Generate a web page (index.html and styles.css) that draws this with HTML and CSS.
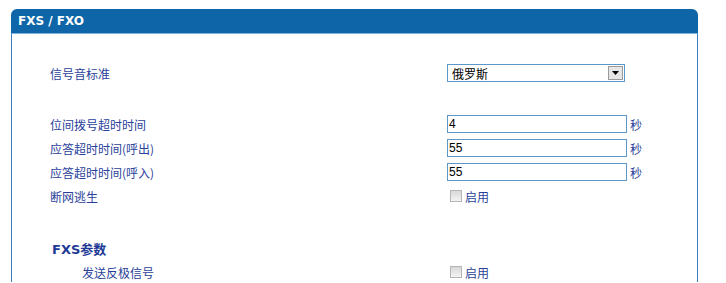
FILE: index.html
```html
<!DOCTYPE html>
<html>
<head>
<meta charset="utf-8">
<title>FXS / FXO</title>
<link rel="stylesheet" href="styles.css">
</head>
<body>

<div class="panel">
  <div class="panel-head">FXS / FXO</div>
  <div class="panel-body">

    <div class="row first">
      <div class="label">信号音标准</div>
      <div class="ctrl">
        <div class="select">
          <span class="select-text">俄罗斯</span>
          <span class="select-btn"><svg width="7" height="4" viewBox="0 0 7 4"><path d="M0 0h7L3.5 4z" fill="#000"/></svg></span>
        </div>
      </div>
    </div>

    <div class="row gap">
      <div class="label">位间拨号超时时间</div>
      <div class="ctrl"><input class="text" value="4"><span class="unit">秒</span></div>
    </div>
    <div class="row">
      <div class="label">应答超时时间(呼出)</div>
      <div class="ctrl"><input class="text" value="55"><span class="unit">秒</span></div>
    </div>
    <div class="row">
      <div class="label">应答超时时间(呼入)</div>
      <div class="ctrl"><input class="text" value="55"><span class="unit">秒</span></div>
    </div>
    <div class="row">
      <div class="label">断网逃生</div>
      <div class="ctrl"><span class="check"></span><span class="unit">启用</span></div>
    </div>

    <div class="row gap2">
      <div class="label section">FXS参数</div>
    </div>
    <div class="row">
      <div class="label sub">发送反极信号</div>
      <div class="ctrl"><span class="check"></span><span class="unit">启用</span></div>
    </div>

  </div>
</div>

</body>
</html>
```

FILE: styles.css
```css
body { margin: 0; background: #fff; overflow: hidden;
  font: 12px "Noto Sans CJK SC", "DejaVu Sans", sans-serif; }

.panel { margin: 9px 0 0 11px; width: 687px; }

.panel-head { height: 24px; display: flex; align-items: center; padding-left: 7px;
  background: #0e66a8; color: #fff; border-radius: 6px 6px 0 0;
  font: bold 12px "DejaVu Sans", sans-serif; }

.panel-body { border-left: 1px solid #3a7fc0; border-right: 1px solid #3a7fc0;
  border-top: 1px solid #7fb3e0; height: 249px; padding-top: 27px; box-sizing: border-box; }

.row { display: flex; align-items: center; height: 24px; }
.row.gap { margin-top: 27px; }
.row.gap2 { margin-top: 28px; }

.label { width: 435px; flex: none; box-sizing: border-box; padding-left: 38px; color: #2a3f9a; }
.label.section { font-weight: bold; font-size: 13px; color: #1e3a96; padding-left: 40px;
  font-family: "DejaVu Sans", "Noto Sans CJK SC", sans-serif; }
.label.sub { padding-left: 70px; }

.ctrl { display: flex; align-items: center; }

.select { width: 176px; height: 16px; border: 1px solid #5d96c8;
  display: flex; align-items: center; justify-content: space-between; }
.select-text { padding-left: 4px; color: #000; }
.select-btn { width: 15px; height: 14px; margin-right: 1px; background: #e6e6e6;
  border: 1px solid #9a9a9a; box-sizing: border-box;
  display: flex; align-items: center; justify-content: center; }

.text { width: 180px; height: 18px; box-sizing: border-box; margin: 0; padding: 0 1px;
  border: 1px solid #5d96c8; font: 12px "Liberation Sans", sans-serif; color: #000;
  outline: none; }

.unit { color: #2a3f9a; margin-left: 3px; }

.check { display: inline-block; width: 12px; height: 12px; margin-left: 3px;
  border: 1px solid #b5b5b5; background: linear-gradient(#d8d8d8, #f4f4f4);
  box-sizing: border-box; }
```
